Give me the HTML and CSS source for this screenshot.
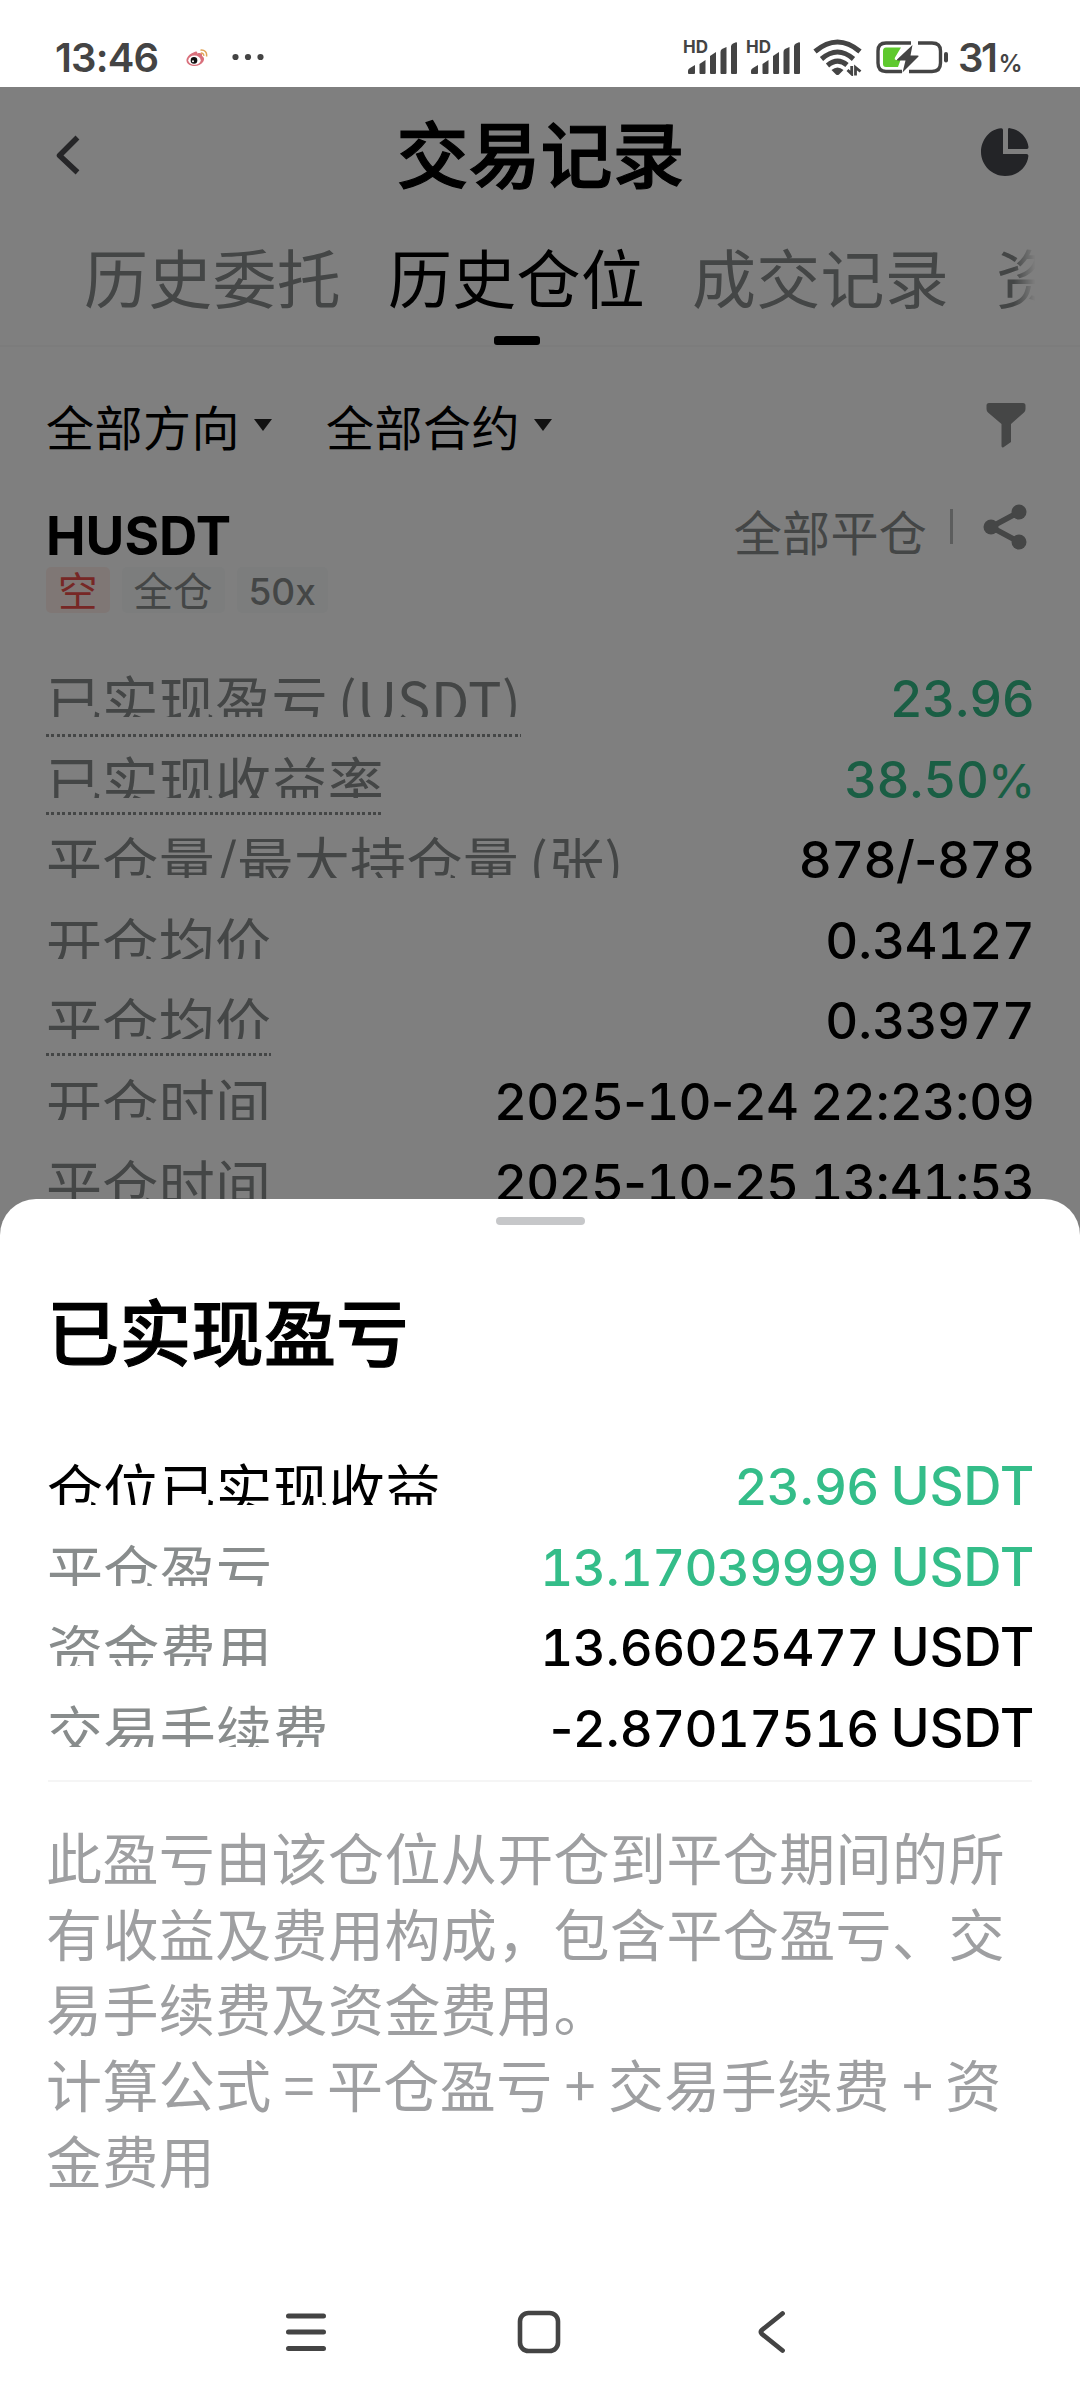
FILE: index.html
```html
<!DOCTYPE html>
<html lang="zh-CN">
<head>
<meta charset="utf-8">
<title>交易记录</title>
<link rel="stylesheet" href="styles.css">
</head>
<body>
<div class="screen">
  <div class="status">
    <span class="clock">13:46</span>
    <svg class="weibo" width="22" height="19" viewBox="0 0 22 19">
      <path d="M8 3.2C10 2 11.500 2.500 11.300 4.400C15 3.400 16.600 4.600 15.900 6.900C18 7.800 18.600 10 17.500 12.200C15.500 16 10.500 17.800 6 16.800C1.500 15.800-.5 12.800.9 9.300C2.200 6.300 5 4.300 8 3.200Z" fill="#d9707c"/>
      <ellipse cx="8.500" cy="11.200" rx="6.200" ry="4.600" fill="#fff"/>
      <circle cx="8" cy="11.400" r="3.300" fill="#111"/><circle cx="7" cy="12.300" r="1" fill="#fff"/>
      <path d="M14.500 1.200C18.500.6 21.300 3.400 20.500 7.500M14.800 4C16.800 3.900 17.900 5 17.700 6.900" fill="none" stroke="#e0a458" stroke-width="1.500"/>
    </svg>
    <svg class="dots" width="32" height="8" viewBox="0 0 32 8" fill="#444"><circle cx="3.500" cy="4" r="3.100"/><circle cx="16" cy="4" r="3.100"/><circle cx="28.500" cy="4" r="3.100"/></svg>
    <div class="status-right">
      <div class="signal"><span class="hd">HD</span>
        <svg width="54" height="34" viewBox="0 0 54 34" fill="#444"><path d="M3 32V30Q3 28 5 27L10 24V32Q10 33 9 33H4Q3 33 3 32ZM14.500 23L20.500 19V32Q20.500 33 19.500 33H15.500Q14.500 33 14.500 32ZM25 15L31 11V32Q31 33 30 33H26Q25 33 25 32ZM35.500 11Q35.500 9 37 8L41.500 6V32Q41.500 33 40.500 33H36.500Q35.500 33 35.500 32ZM46 5.500Q46 3.500 48 2.500L51 1.200Q52 1 52 2V32Q52 33 51 33H47Q46 33 46 32Z"/></svg>
      </div>
      <div class="signal"><span class="hd">HD</span>
        <svg width="54" height="34" viewBox="0 0 54 34" fill="#444"><path d="M3 32V30Q3 28 5 27L10 24V32Q10 33 9 33H4Q3 33 3 32ZM14.500 23L20.500 19V32Q20.500 33 19.500 33H15.500Q14.500 33 14.500 32ZM25 15L31 11V32Q31 33 30 33H26Q25 33 25 32ZM35.500 11Q35.500 9 37 8L41.500 6V32Q41.500 33 40.500 33H36.500Q35.500 33 35.500 32ZM46 5.500Q46 3.500 48 2.500L51 1.200Q52 1 52 2V32Q52 33 51 33H47Q46 33 46 32Z"/></svg>
      </div>
      <svg class="wifi" width="50" height="37" viewBox="0 0 50 37" fill="none" stroke="#444" stroke-width="5">
        <path d="M2 12.500Q24.500-6.500 47 12.500M8.500 20Q24.500 6 40.500 20M14.500 26.500Q24.500 18 34 26"/>
        <path d="M18.500 31Q24.500 26 30.500 31L26 35.500Q24.500 36.500 23 35.500Z" fill="#444" stroke="none"/>
        <path d="M34.500 31L38.700 35V27M42.500 36.500V28.500L47.500 32.500" stroke-width="2.800"/>
      </svg>
      <svg class="battery" width="74" height="38" viewBox="0 0 74 38">
        <path d="M36 5H11Q3 5 3 13V25Q3 33.500 11 33.500H27M34 33.500H57Q65.500 33.500 65.500 25V13Q65.500 5 57 5H43" fill="none" stroke="#444" stroke-width="3.400"/>
        <path d="M11 9.500H26L20 19.500Q19 22 21.500 22H25.500L23 29H11Q8 29 8 26V13Q8 9.500 11 9.500Z" fill="#5fc92e"/>
        <path d="M37.500 7L22 21.500Q21.500 22.500 23 22.500H30.500L27.500 34.500L43.500 18.500Q44 17.500 42.500 17.500H35.500Z" fill="#444"/>
        <rect x="69" y="14" width="4" height="10.500" rx="2" fill="#444"/>
      </svg>
      <span class="pct">31<small>%</small></span>
    </div>
  </div>

  <div class="page">
    <header class="head">
      <svg width="26" height="42" viewBox="0 0 26 42" fill="none" stroke="#4c4c50" stroke-width="5.500" stroke-linejoin="round" stroke-linecap="square"><path d="M20.500 5.500L4.500 21.500L20.500 36.500"/></svg>
      <h1>交易记录</h1>
      <svg width="49" height="50" viewBox="0 0 49 50" fill="#46484f"><path d="M20 1.200Q22 1 22 3V27H45.500Q47.600 27 47.400 29C46 41 36 49 24 49C11 49 0 38 0 25C0 12.500 9 2 20 1.200Z"/><path d="M27 2.500Q27 .8 29 1.200C39 2.500 46.500 10.500 47.500 20Q47.600 22 46 22H27Z"/></svg>
    </header>
    <nav class="tabs">
      <span>历史委托</span><span class="on">历史仓位</span><span>成交记录</span><span>资金流水</span>
    </nav>
    <div class="filters">
      <span>全部方向</span><i class="caret"></i><span class="second">全部合约</span><i class="caret"></i>
      <svg width="40" height="46" viewBox="0 0 40 46" fill="#8a8c8c"><path d="M3 1H37Q39.500 1 39.500 3.500V7Q39.500 9 38 10.500L25 22V40L17.500 45.200Q15.500 46 15.500 44V22L2 10.500Q.5 9 .5 7V3.500Q.5 1 3 1Z"/></svg>
    </div>
    <div class="symbol">
      <strong>HUSDT</strong>
      <span class="closed">全部平仓</span><i class="bar"></i>
      <svg width="44" height="46" viewBox="0 0 44 46" fill="#8a8c8c" stroke="#8a8c8c"><path d="M36 8L8 23L36 38" fill="none" stroke-width="5.500"/><g stroke="none"><circle cx="8" cy="23" r="7.500"/><circle cx="36" cy="8" r="7.500"/><circle cx="36" cy="38" r="7.500"/></g></svg>
    </div>
    <div class="tags"><span class="short">空</span><span>全仓</span><span class="lev">50x</span></div>
    <div class="rows">
      <div class="row"><span class="key dotted low"><span>已实现盈亏 (USDT)</span></span><b class="up">23<i>.</i>96</b></div>
      <div class="row"><span class="key dotted"><span>已实现收益率</span></span><b class="up">38<i>.</i>50<i class="percent">%</i></b></div>
      <div class="row"><span class="key"><span>平仓量/最大持仓量 (张)</span></span><b>878<i>/-</i>878</b></div>
      <div class="row"><span class="key"><span>开仓均价</span></span><b>0<i>.</i>34127</b></div>
      <div class="row"><span class="key dotted"><span>平仓均价</span></span><b>0<i>.</i>33977</b></div>
      <div class="row"><span class="key"><span>开仓时间</span></span><b>2025<i>-</i>10<i>-</i>24<i> </i>22<i>:</i>23<i>:</i>09</b></div>
      <div class="row"><span class="key"><span>平仓时间</span></span><b>2025<i>-</i>10<i>-</i>25<i> </i>13<i>:</i>41<i>:</i>53</b></div>
    </div>
    <div class="scrim"></div>
  </div>

  <section class="sheet">
    <i class="handle"></i>
    <h2>已实现盈亏</h2>
    <div class="rows">
      <div class="row"><span class="key main"><span>仓位已实现收益</span></span><b class="up">23<i>.</i>96<i> </i><em>USDT</em></b></div>
      <div class="row"><span class="key"><span>平仓盈亏</span></span><b class="up">13<i>.</i>17039999<i> </i><em>USDT</em></b></div>
      <div class="row"><span class="key"><span>资金费用</span></span><b>13<i>.</i>66025477<i> </i><em>USDT</em></b></div>
      <div class="row"><span class="key"><span>交易手续费</span></span><b><i>-</i>2<i>.</i>87017516<i> </i><em>USDT</em></b></div>
    </div>
    <p>此盈亏由该仓位从开仓到平仓期间的所<br>有收益及费用构成，包含平仓盈亏、交<br>易手续费及资金费用。<br>计算公式 = 平仓盈亏 + 交易手续费 + 资<br>金费用</p>
    <div class="sysnav">
      <svg width="42" height="44" viewBox="0 0 42 44" stroke="#444" stroke-width="5" stroke-linecap="round"><path d="M3.500 6H38.500M3.500 22H38.500M3.500 38.500H38.500"/></svg>
      <svg class="home" width="44" height="44" viewBox="0 0 44 44" fill="none" stroke="#444" stroke-width="4.600"><rect x="3" y="3" width="38" height="38" rx="8.500"/></svg>
      <svg width="30" height="44" viewBox="0 0 30 44" fill="none" stroke="#444" stroke-width="4.800" stroke-linecap="round"><path d="M25.500 3.500L5 20Q3 22 5 24L25.500 40.500"/></svg>
    </div>
  </section>
</div>
</body>
</html>
```
FILE: styles.css
```css
* { box-sizing: border-box; }
body { margin: 0; background: #fff; }
.screen {
  position: relative;
  width: 1080px;
  height: 2400px;
  overflow: hidden;
  font-family: "Noto Sans CJK SC", sans-serif;
  color: #000;
}
svg { display: block; flex: none; }
i, em { font-style: normal; }

/* system status bar */
.status {
  display: flex;
  height: 87px;
  padding: 0 57px 0 55px;
  color: #444;
  font-family: Inter, sans-serif;
}
.clock { width: 131px; font-size: 40px; font-weight: 600; line-height: 115px; letter-spacing: -.8px; }
.weibo { margin-top: 49px; }
.dots { margin: 53px 0 0 24px; }
.status-right { display: flex; margin-left: auto; }
.signal { position: relative; width: 63px; padding: 41px 0 0 1px; }
.hd { position: absolute; left: -1px; top: 37px; font-size: 17px; font-weight: 700; line-height: 20px; }
.wifi { margin: 39px 0 0 3px; }
.battery { margin: 38px 0 0 12px; }
.pct { width: 65px; margin-left: 9px; font-size: 40px; font-weight: 600; line-height: 115px; letter-spacing: -2.500px; white-space: nowrap; }
.pct small { font-size: 24px; letter-spacing: 0; margin-left: 3px; }

/* dimmed history page */
.page { position: relative; height: 2313px; background: #fff; }
.scrim { position: absolute; inset: 0; background: rgba(0, 0, 0, .5); }
.head { display: flex; align-items: center; justify-content: space-between; height: 135px; padding: 0 50px 0 55px; }
.head svg:last-child { margin-top: -6px; }
h1 { margin: -8px 0 0 19px; font-size: 72px; font-weight: 500; line-height: 135px; -webkit-text-stroke: 1.2px #000; }
.tabs {
  display: flex;
  gap: 47px;
  height: 125px;
  padding-left: 84px;
  font-size: 64px;
  line-height: 107px;
  letter-spacing: .25px;
  color: #888c8c;
  white-space: nowrap;
  overflow: hidden;
  border-bottom: 2px solid #f8f8f8;
}
.tabs span { flex: none; }
.tabs span:last-child { width: 44px; overflow: hidden; -webkit-mask-image: linear-gradient(90deg, #000 40%, transparent 90%); mask-image: linear-gradient(90deg, #000 40%, transparent 90%); }
.on { color: #000; }
.on::after { content: ""; display: block; width: 46px; height: 9px; margin: 7px auto 0; background: #000; border-radius: 3px; }
.filters { display: flex; align-items: center; height: 156px; padding: 0 54px 0 46px; font-size: 48px; line-height: 60px; letter-spacing: .5px; }
.filters svg { margin: 0 0 0 auto; }
.filters .second { margin-left: 54px; }
.caret { margin: 0 0 0 14px; border: 9px solid transparent; border-top: 12px solid #222; border-bottom: 0; }
.symbol { display: flex; height: 64px; padding: 7px 53px 0 46px; }
.symbol strong { font: 700 53px/52px Inter, sans-serif; margin-right: auto; letter-spacing: 0; }
.closed { font-size: 48px; line-height: 40px; letter-spacing: .3px; color: #888c8c; }
.bar { width: 3px; height: 35px; margin: -1px 30px 0 23px; background: #b8baba; }
.symbol svg { margin-top: -6px; }
.tags { display: flex; gap: 12px; height: 98px; padding-left: 46px; font-size: 39.500px; line-height: 44px; color: #888c8c; }
.tags span { height: 46px; padding: 0 12px; border-radius: 5px; background: #f8fbfb; }
.tags .short { color: #ee4f4a; background: #ffefeb; }
.lev { font: 500 37px/49px Inter, sans-serif; }
.rows { padding: 0 46px; }
.row { display: flex; justify-content: space-between; height: 80.600px; }
.key { font-size: 56px; line-height: 67px; letter-spacing: .35px; word-spacing: -3px; color: #888c8c; white-space: nowrap; }
.key > span { display: block; height: 52px; overflow: hidden; }
.dotted::after {
  content: "";
  display: block;
  height: 3px;
  margin-top: 14px;
  background: repeating-linear-gradient(90deg, #888c8c 0 3px, transparent 3px 5.450px);
}
.low::after { margin-top: 17px; }
.row b { font: 500 51px/67px Inter, sans-serif; font-variant-numeric: tabular-nums; letter-spacing: -.7px; word-spacing: -1px; white-space: nowrap; }
.row b i { font-variant-numeric: normal; }
.row b .percent { font-size: 47px; line-height: 1; letter-spacing: -1px; }
.row .up { color: #34bd89; }

/* bottom sheet */
.sheet {
  position: absolute;
  left: 0;
  right: 0;
  top: 1199px;
  bottom: 0;
  padding-top: 18px;
  border-radius: 36px 36px 0 0;
  background: #fff;
}
.handle { display: block; width: 89px; height: 8px; margin: 0 auto; border-radius: 4px; background: #c6c7c9; }
h2 { margin: 0 0 0 47px; height: 228px; padding-top: 52px; font-size: 72px; font-weight: 500; line-height: 104px; letter-spacing: .3px; -webkit-text-stroke: 1.2px #000; }
.sheet .rows { height: 329px; margin: 0 48px; padding: 0; border-bottom: 2px solid #f5f5f5; }
.sheet .key { margin-left: -1px; }
.sheet .main { color: #000; }
.row em { font-size: 53px; letter-spacing: -.3px; line-height: 1; }
.sheet b { margin-right: -2px; }
p { margin: 0; height: 458px; padding: 36px 0 0 46px; font-size: 56px; line-height: 75.700px; letter-spacing: .4px; word-spacing: -1px; color: #9e9fa1; white-space: nowrap; }
.sysnav { display: flex; justify-content: space-between; padding: 70px 293px 0 285px; }
.home { margin-left: -6px; }
```
